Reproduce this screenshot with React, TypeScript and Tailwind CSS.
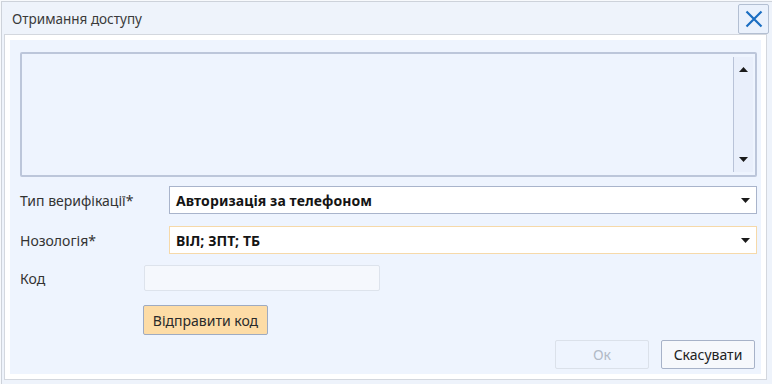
import React from "react"

const font = "font-['Noto_Sans','Open_Sans',sans-serif]"

function Caret({ className = "" }: { className?: string }) {
  return (
    <svg width="9" height="5" viewBox="0 0 9 5" className={className}>
      <path d="M0 0h9L4.5 5z" fill="#1a1a1a" />
    </svg>
  )
}

function Select({ value, warn }: { value: string; warn?: boolean }) {
  return (
    <div
      className={
        "flex h-[28px] w-[588px] items-center justify-between bg-white pl-[6px] pr-[6px] border " +
        (warn ? "border-[#f6d9a9]" : "border-[#a9b4cb]")
      }
    >
      <span className="text-[14px] font-bold tracking-[0.1px] text-[#141414]">{value}</span>
      <Caret />
    </div>
  )
}

export default function App() {
  return (
    <div className={`w-[772px] h-[384px] bg-[#f7f9fc] pl-px pt-px ${font}`}>
      <div className="flex h-full flex-col border-l border-t border-[#cdd2da] bg-[#eef3fb]">
        {/* title bar */}
        <div className="flex h-[32px] items-start justify-between pl-[10px] pr-[3px] pt-[2px]">
          <span className="mt-[9px] text-[13.5px] leading-none text-[#3a3a3a]">Отримання доступу</span>
          <button className="flex h-[30px] w-[31px] items-center justify-center rounded-[2px] border border-[#b3bfd2] bg-[#eaf1fc]">
            <svg width="20" height="20" viewBox="0 0 20 20">
              <path d="M2.5 2.5l15 15M17.5 2.5l-15 15" stroke="#1b6ec2" strokeWidth="2.2" />
            </svg>
          </button>
        </div>

        {/* body */}
        <div className="ml-[2px] h-[346px] w-[763px] border border-[#d3d7de] bg-white p-[5px]">
          <div className="flex h-full flex-col bg-[#eef4fe] text-[14px] text-[#333]">
            {/* memo */}
            <div className="ml-[10px] mt-[12px] flex h-[125px] w-[737px] rounded-[2px] border-2 border-[#bcc6da] bg-[#eef4fe]">
              <div className="flex-1" />
              <div className="my-[3px] mr-[2px] flex w-[20px] flex-col items-center justify-between border-l border-[#b9c3d8] bg-[#e9effb] py-[10px]">
                <Caret className="rotate-180" />
                <Caret />
              </div>
            </div>

            <div className="mt-[9px] flex items-center">
              <span className="ml-[10px] w-[149px]">Тип верифікації*</span>
              <Select value="Авторизація за телефоном" />
            </div>

            <div className="mt-[12px] flex items-center">
              <span className="ml-[10px] w-[149px]">Нозологія*</span>
              <Select value="ВІЛ; ЗПТ; ТБ" warn />
            </div>

            <div className="mt-[11px] flex items-center">
              <span className="ml-[10px] w-[124px]">Код</span>
              <div className="h-[26px] w-[236px] rounded-[2px] border border-[#dde3ec] bg-[#f5f8fd]" />
            </div>

            <button className="ml-[133px] mt-[14px] h-[30px] w-[125px] rounded-[2px] border border-[#9eabc2] bg-[#fddca6] text-[14px] text-[#2a2a2a]">
              Відправити код
            </button>

            <div className="mt-[5px] flex justify-end gap-[12px] pr-[6px]">
              <button className="h-[29px] w-[94px] rounded-[2px] border border-[#dbe1ea] bg-[#eef4fe] text-[14px] text-[#b2bac6]">
                Ок
              </button>
              <button className="h-[29px] w-[94px] rounded-[2px] border border-[#a7b2c8] bg-[#f6f8fc] text-[14px] text-[#222]">
                Скасувати
              </button>
            </div>
          </div>
        </div>
      </div>
    </div>
  )
}
